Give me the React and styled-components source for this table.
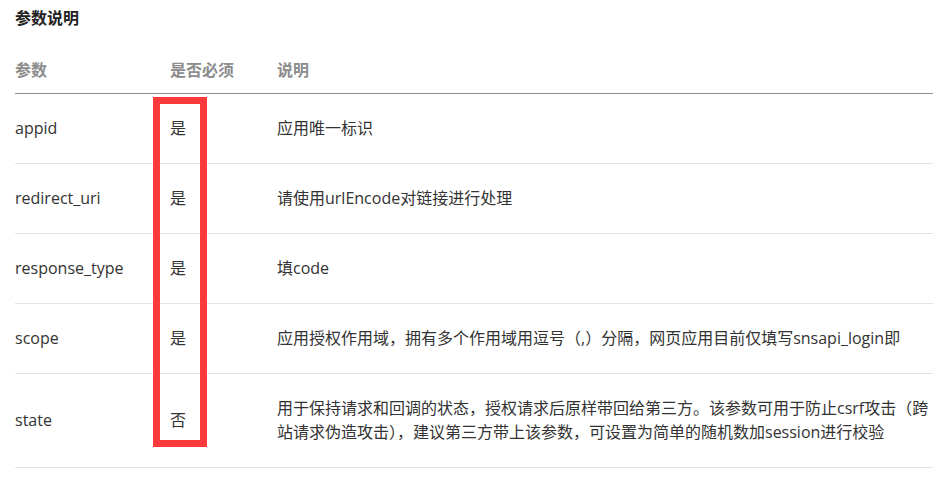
import React from "react";
import styled, { createGlobalStyle } from "styled-components";

const Global = createGlobalStyle`
  html, body { margin: 0; padding: 0; background: #fff; }
  body { font-family: "Open Sans", "Noto Sans CJK SC", sans-serif; }
`;

const Page = styled.div`
  position: relative;
  padding: 0 18px 0 15px;
`;

const Title = styled.h3`
  margin: 0;
  padding-top: 8px;
  font-size: 16px;
  line-height: 20px;
  font-weight: 700;
  color: #222;
`;

const Table = styled.div`
  display: grid;
  grid-template-columns: 155px 107px 1fr;
  font-size: 16px;
  color: #333;
`;

const HeadCell = styled.div`
  padding: 32px 0 13px;
  line-height: 20px;
  font-weight: 700;
  color: #8c8c8c;
  border-bottom: 1px solid #8c8c8c;
`;

const Cell = styled.div`
  display: flex;
  align-items: center;
  padding: 22px 0 23px;
  line-height: 24px;
  border-bottom: 1px solid #e4e4e4;
`;

const Highlight = styled.div`
  position: absolute;
  left: 153px;
  top: 97px;
  width: 54px;
  height: 350px;
  box-sizing: border-box;
  border: 7px solid #fc3a3c;
  pointer-events: none;
`;

const rows = [
  ["appid", "是", "应用唯一标识"],
  ["redirect_uri", "是", "请使用urlEncode对链接进行处理"],
  ["response_type", "是", "填code"],
  ["scope", "是", "应用授权作用域，拥有多个作用域用逗号（,）分隔，网页应用目前仅填写snsapi_login即"],
  [
    "state",
    "否",
    "用于保持请求和回调的状态，授权请求后原样带回给第三方。该参数可用于防止csrf攻击（跨站请求伪造攻击），建议第三方带上该参数，可设置为简单的随机数加session进行校验",
  ],
];

export default function App() {
  return (
    <Page>
      <Global />
      <Title>参数说明</Title>
      <Table>
        <HeadCell>参数</HeadCell>
        <HeadCell>是否必须</HeadCell>
        <HeadCell>说明</HeadCell>
        {rows.map(([p, r, d]) => (
          <React.Fragment key={p}>
            <Cell>{p}</Cell>
            <Cell>{r}</Cell>
            <Cell>{d}</Cell>
          </React.Fragment>
        ))}
      </Table>
      <Highlight />
    </Page>
  );
}
